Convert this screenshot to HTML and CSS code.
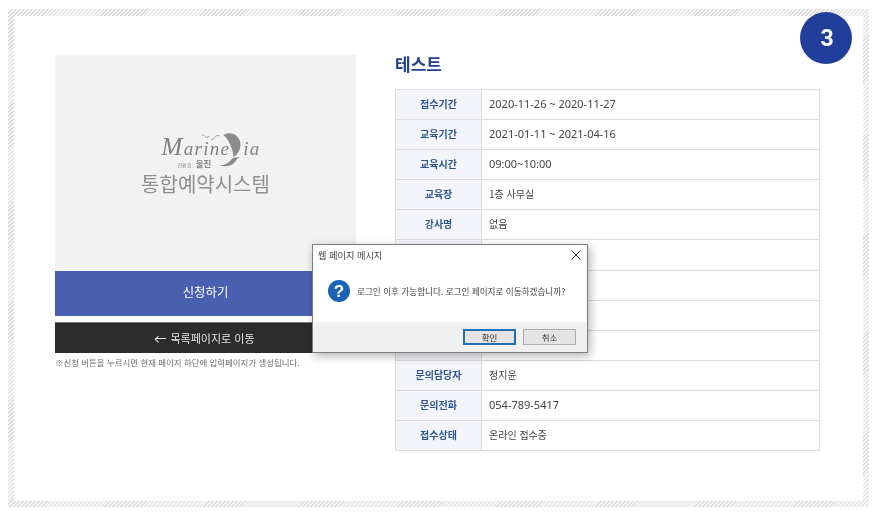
FILE: index.html
```html
<!DOCTYPE html>
<html lang="ko">
<head>
<meta charset="utf-8">
<title>통합예약시스템</title>
<link rel="stylesheet" href="styles.css">
</head>
<body>
<div class="frame">
  <div class="sheet">
    <div class="badge">3</div>
    <div class="columns">
      <section class="left">
        <div class="poster">
          <div class="logo">
            <svg class="logo-art" viewBox="0 0 100 40" width="100" height="40" aria-hidden="true">
              <path class="bird" d="M46 4c2 .2 3.500 1 4.500 2.500 1-.7 2-1 3-.7M55 9c2-.6 4-2.200 5.500-4.500 1.200-.2 2.300 0 3.500.5"/>
              <path class="sail" d="M67.500 4C70 2 74 1.500 77.500 3 82 5 85 9.500 84.500 15c-.5 4.500-3 8.500-7 11.500C77 18 73.500 10 67.500 4Z"/>
              <path class="sail" d="M62.500 34c6 .8 10.500-2 13.500-6.500 2.500-1 5-1.500 7.500-1.500-2.500 1.500-3.500 4-6 6.500-3.500 3-10 3.500-15 1.500Z"/>
            </svg>
            <div class="logo-word"><span class="big">M</span>arine<span class="gap"></span>ia</div>
            <div class="logo-sub"><small>친환경</small> 울진</div>
          </div>
          <div class="poster-title">통합예약시스템</div>
        </div>
        <a class="btn btn-apply">신청하기</a>
        <a class="btn btn-list"><span class="arrow"></span>목록페이지로 이동</a>
        <p class="note">※신청 버튼을 누르시면 현재 페이지 하단에 입력페이지가 생성됩니다.</p>
      </section>
      <section class="right">
        <h2 class="title">테스트</h2>
        <table class="info">
          <tr><th>접수기간</th><td class="num">2020-11-26 ~ 2020-11-27</td></tr>
          <tr><th>교육기간</th><td class="num">2021-01-11 ~ 2021-04-16</td></tr>
          <tr><th>교육시간</th><td class="num">09:00~10:00</td></tr>
          <tr><th>교육장</th><td>1층 사무실</td></tr>
          <tr><th>강사명</th><td>없음</td></tr>
          <tr class="tall"><th></th><td></td></tr>
          <tr><th></th><td></td></tr>
          <tr><th></th><td></td></tr>
          <tr><th></th><td></td></tr>
          <tr><th>문의담당자</th><td>정지윤</td></tr>
          <tr><th>문의전화</th><td class="num">054-789-5417</td></tr>
          <tr><th>접수상태</th><td>온라인 접수중</td></tr>
        </table>
      </section>
    </div>
    <div class="dialog">
      <div class="dialog-head">
        <span>웹 페이지 메시지</span>
        <svg class="close" viewBox="0 0 10 10" width="10" height="10" aria-hidden="true"><path d="M.5.5l9 9M9.500.5l-9 9"/></svg>
      </div>
      <div class="dialog-body">
        <svg class="help" viewBox="0 0 22 22" width="22" height="22" aria-hidden="true">
          <circle cx="11" cy="11" r="11"/>
          <text x="11" y="17">?</text>
        </svg>
        <span>로그인 이후 가능합니다. 로그인 페이지로 이동하겠습니까?</span>
      </div>
      <div class="dialog-foot">
        <button class="dlg-btn dlg-ok">확인</button>
        <button class="dlg-btn">취소</button>
      </div>
    </div>
  </div>
</div>
</body>
</html>
```

FILE: styles.css
```css
* { box-sizing: border-box; }
html, body { margin: 0; padding: 0; }
body {
  width: 878px;
  height: 512px;
  overflow: hidden;
  background: #fff;
  font-family: "Noto Sans CJK KR", "Noto Sans", sans-serif;
  padding: 9px 8px 4px 8px;
}
.frame {
  width: 861px;
  height: 498px;
  padding: 7px 6px 6px 6px;
  background: repeating-linear-gradient(135deg, #dcdcdc 0 1px, #f6f6f6 1px 2.800px);
  filter: blur(.35px);
}
.sheet {
  position: relative;
  width: 100%;
  height: 100%;
  background: #fff;
  padding: 39px 0 0 41px;
}
.badge {
  position: absolute;
  top: -4px;
  right: 11px;
  width: 52px;
  height: 52px;
  padding-left: 2px;
  border-radius: 50%;
  background: #213f9a;
  color: #fff;
  font: 700 23px/54px Roboto, sans-serif;
  text-align: center;
}
.columns { display: flex; gap: 39px; align-items: flex-start; }
.left { width: 301px; flex: none; }
.poster {
  height: 216px;
  background: #f2f2f2;
  display: flex;
  flex-direction: column;
  align-items: center;
  padding-top: 76px;
  color: #8c8c8c;
}
.logo { position: relative; width: 100px; height: 40px; }
.logo-art { position: absolute; left: 0; top: 0; }
.bird { fill: none; stroke: #8e8e8e; stroke-width: .8; }
.sail { fill: #8c8c8c; }
.logo-word {
  position: absolute;
  left: 6px;
  top: 7px;
  height: 18px;
  display: flex;
  align-items: baseline;
  font: italic 400 19px/18px "Liberation Serif", serif;
  color: #808080;
  letter-spacing: 1.300px;
  white-space: nowrap;
}
.logo-word .big { font-size: 25px; }
.logo-word .gap { width: 13px; }
.logo-sub {
  position: absolute;
  left: 22px;
  top: 28px;
  font-size: 8.500px;
  line-height: 9px;
  font-weight: 700;
  color: #868686;
  white-space: nowrap;
}
.logo-sub small { font-size: 5px; font-weight: 400; margin-right: 2px; }
.poster-title {
  margin-top: -1px;
  font-size: 20px;
  line-height: 28px;
  color: #8f8f8f;
  white-space: nowrap;
}
.btn {
  display: block;
  text-align: center;
  color: #fff;
}
.btn-apply {
  height: 45px;
  background: #4a5fb0;
  font-size: 12.400px;
  line-height: 42px;
}
.btn-list {
  display: flex;
  align-items: center;
  justify-content: center;
  gap: 4px;
  height: 31px;
  margin-top: 6px;
  padding-right: 1px;
  background: #2c2c2c;
  border-top: 1px solid #777;
  font-size: 11px;
  line-height: 29px;
  color: #e4e4e4;
}
.arrow {
  position: relative;
  width: 11px;
  height: 1px;
  background: #e4e4e4;
}
.arrow::before {
  content: "";
  position: absolute;
  left: 0;
  top: -2px;
  width: 4px;
  height: 4px;
  border-left: 1px solid #e4e4e4;
  border-bottom: 1px solid #e4e4e4;
  transform: rotate(45deg) translate(1px, 0);
}
.note {
  margin: 2px 0 0;
  font-size: 8.450px;
  line-height: 14px;
  color: #6e6e6e;
  white-space: nowrap;
}
.right { width: 425px; flex: none; }
.title {
  margin: -4px 0 0;
  height: 38px;
  font-size: 17px;
  line-height: 26px;
  font-weight: 700;
  color: #1f3f8f;
}
.info {
  width: 425px;
  table-layout: fixed;
  border-collapse: collapse;
  border-top: 1.500px solid #8f96ad;
  font-size: 10px;
}
.info tr { height: 30px; }
.info tr.tall { height: 31px; }
.info th, .info td {
  border: 1px solid #dcdcdc;
  padding: 0 0 2px;
  vertical-align: middle;
}
.info th {
  width: 86px;
  background: #f3f5fa;
  color: #2b5592;
  font-weight: 700;
  text-align: center;
}
.info td {
  padding-left: 7px;
  color: #444;
  background: #fff;
}
.info td.num {
  font-family: "Noto Sans", sans-serif;
  font-size: 11px;
}
.dialog {
  position: absolute;
  left: 298px;
  top: 228px;
  width: 276px;
  height: 109px;
  background: #fff;
  border: 1px solid #7e7e7e;
  box-shadow: 2px 3px 9px rgba(0, 0, 0, .3);
  display: flex;
  flex-direction: column;
  font-size: 8.600px;
  color: #444;
}
.dialog-head {
  height: 20px;
  padding: 0 6px 0 5px;
  display: flex;
  align-items: center;
  justify-content: space-between;
  font-size: 9.200px;
}
.close { fill: none; stroke: #333; stroke-width: 1; }
.dialog-body {
  flex: 1;
  padding: 0 0 5px 15px;
  display: flex;
  align-items: center;
  gap: 7px;
}
.help { flex: none; }
.help circle { fill: #1b64b5; }
.help text {
  fill: #fff;
  font: 700 17px "Liberation Sans", sans-serif;
  text-anchor: middle;
}
.dialog-foot {
  height: 30px;
  background: #f0f0f0;
  display: flex;
  justify-content: flex-end;
  align-items: center;
  gap: 7px;
  padding: 0 11px 0 0;
}
.dlg-btn {
  width: 53px;
  height: 16px;
  padding: 0;
  border: 1px solid #adadad;
  background: #e4e4e4;
  font: 400 8.500px/14px "Noto Sans CJK KR", sans-serif;
  color: #333;
}
.dlg-ok { border: 2px solid #1f6fb8; line-height: 12px; }
```
